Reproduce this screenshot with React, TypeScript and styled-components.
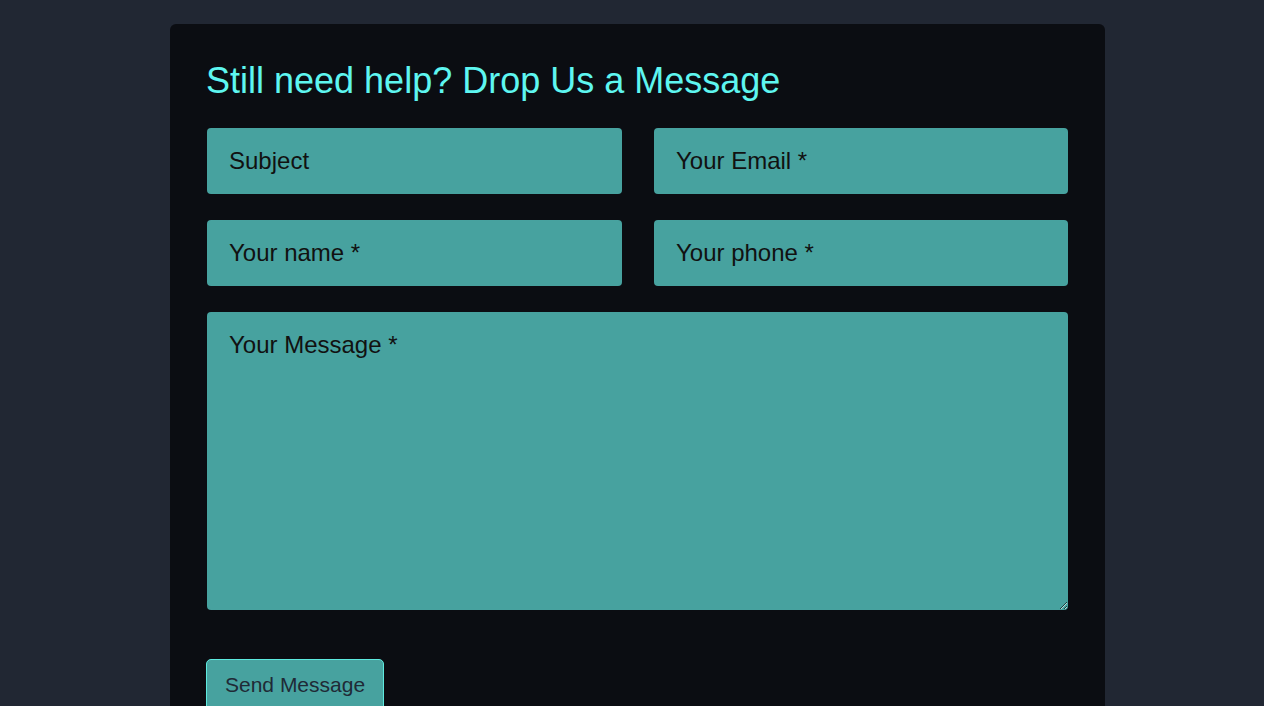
import React from 'react';
import styled, { createGlobalStyle } from 'styled-components';

const GlobalStyle = createGlobalStyle`
  html, body {
    margin: 0;
    padding: 0;
    background: #212733;
    font-family: "Liberation Sans", Arial, sans-serif;
  }
  * {
    box-sizing: border-box;
  }
`;

const Page = styled.div`
  display: flex;
  justify-content: center;
  padding: 24px 0 0 11px;
  min-height: 706px;
`;

const Card = styled.section`
  width: 935px;
  background: #0b0d12;
  border-radius: 6px;
  padding: 36px 37px 60px 37px;
`;

const Heading = styled.h2`
  margin: 0 0 26px -1px;
  font-size: 36px;
  font-weight: 400;
  line-height: 42px;
  color: #5ef6f0;
`;

const Form = styled.form`
  display: flex;
  flex-direction: column;
`;

const FieldGrid = styled.div`
  display: grid;
  grid-template-columns: 415px 414px;
  column-gap: 32px;
  row-gap: 26px;
  margin-bottom: 26px;
`;

const fieldStyle = `
  display: block;
  width: 100%;
  background: #47a29f;
  border: none;
  border-radius: 4px;
  color: #111;
  font-family: "Liberation Sans", Arial, sans-serif;
  font-size: 24px;
  outline: none;
  &::placeholder {
    color: #111;
    opacity: 1;
  }
`;

const Field = styled.input`
  ${fieldStyle}
  height: 66px;
  padding: 0 22px;
`;

const MessageField = styled.textarea`
  ${fieldStyle}
  height: 298px;
  padding: 19px 22px;
  line-height: 28px;
  resize: vertical;
`;

const SendButton = styled.button`
  align-self: flex-start;
  margin: 49px 0 0 -1px;
  padding: 12px 18px 14px;
  background: #47a29f;
  border: 1px solid #5eeadf;
  border-radius: 5px;
  color: #1f2a36;
  font-family: "Liberation Sans", Arial, sans-serif;
  font-size: 21px;
  line-height: 26px;
  cursor: pointer;
`;

export default function App() {
  return (
    <>
      <GlobalStyle />
      <Page>
        <Card>
          <Heading>Still need help? Drop Us a Message</Heading>
          <Form onSubmit={(e) => e.preventDefault()}>
            <FieldGrid>
              <Field type="text" placeholder="Subject" />
              <Field type="email" placeholder="Your Email *" />
              <Field type="text" placeholder="Your name *" />
              <Field type="tel" placeholder="Your phone *" />
            </FieldGrid>
            <MessageField placeholder="Your Message *" />
            <SendButton type="submit">Send Message</SendButton>
          </Form>
        </Card>
      </Page>
    </>
  );
}
